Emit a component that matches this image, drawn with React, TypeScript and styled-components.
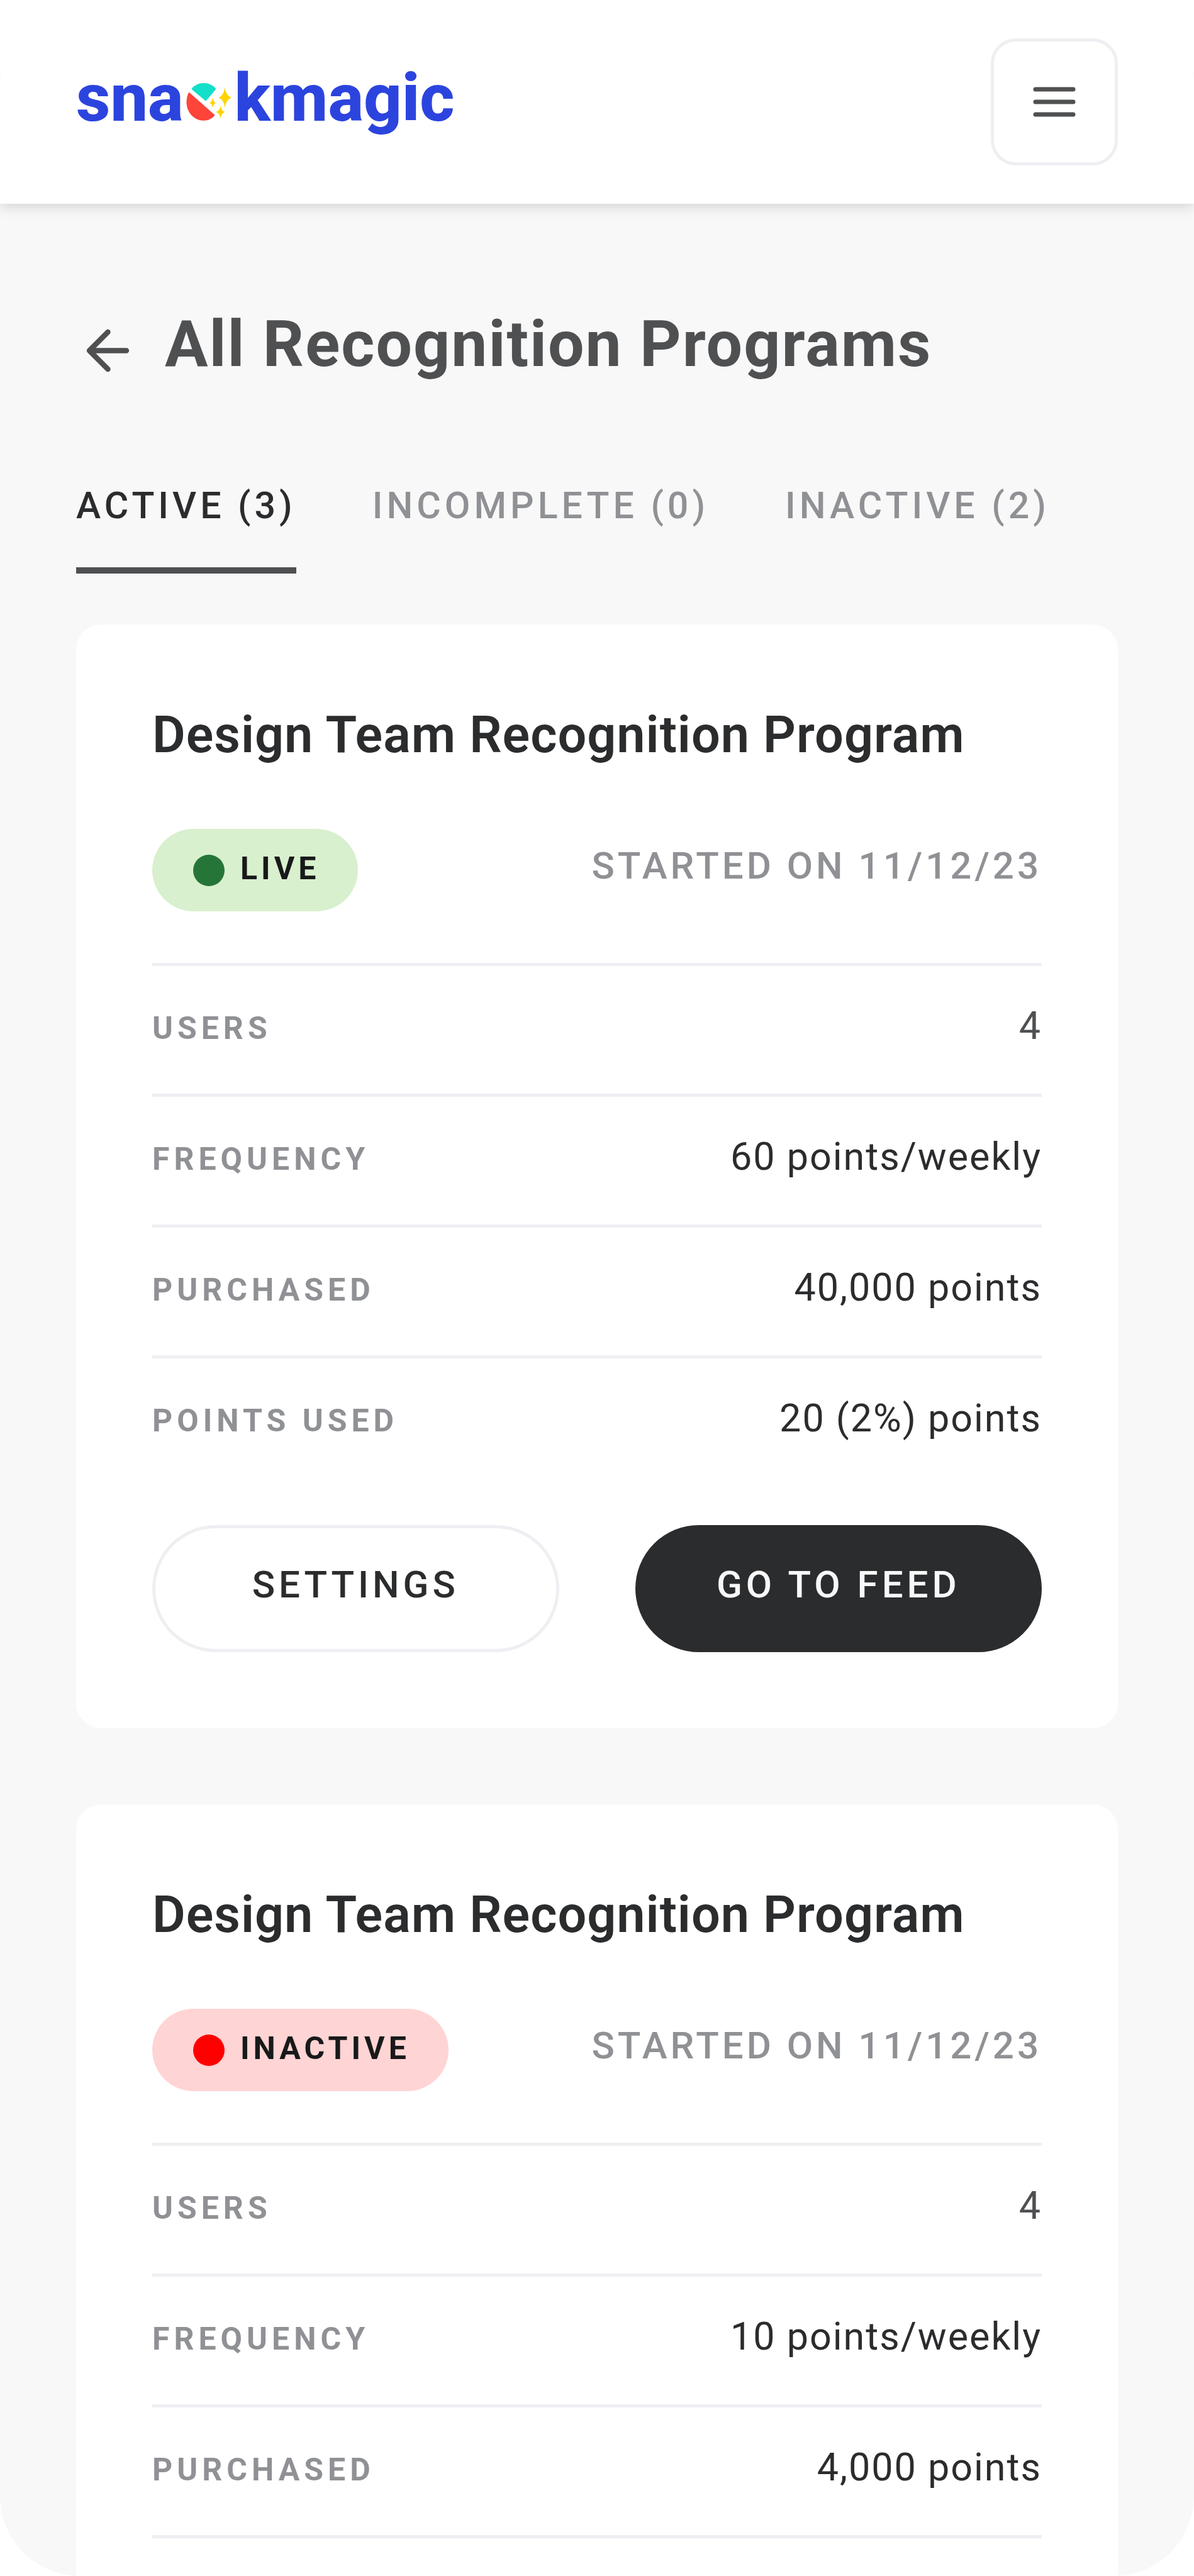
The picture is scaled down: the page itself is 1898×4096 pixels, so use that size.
import React, { useState } from "react";
import styled, { createGlobalStyle, css } from "styled-components";

const color = {
  ink: "#2b2c2e",
  slate: "#4f5052",
  muted: "#8f9195",
  line: "#eeeff2",
  page: "#f8f8f8",
  white: "#ffffff",
};

const GlobalStyle = createGlobalStyle`
  *, *::before, *::after { box-sizing: border-box; }
  body {
    margin: 0;
    background: ${color.white};
    color: ${color.ink};
    font-family: Roboto, "Liberation Sans", sans-serif;
  }
  h1, h2, dl, dt, dd { margin: 0; }
  button { font: inherit; color: inherit; cursor: pointer; }
`;

const capsText = css`
  font-size: 60px;
  line-height: 75px;
  font-weight: 500;
  letter-spacing: 6px;
  text-transform: uppercase;
`;

const Screen = styled.div`
  display: flex;
  flex-direction: column;
  height: 100vh;
  overflow: hidden;
  border-radius: 127px;
  background: ${color.page};
`;

const Header = styled.header`
  position: relative;
  flex: none;
  display: flex;
  align-items: center;
  justify-content: space-between;
  padding: 61px 121px;
  background: ${color.white};
  box-shadow: 0 5px 20px rgba(0, 0, 0, 0.15);
`;

const LogoLink = styled.a`
  display: flex;
  align-items: baseline;
  gap: 4px;
  padding-bottom: 12px;
  color: #2c44de;
  font-size: 106px;
  line-height: 120px;
  font-weight: 800;
  text-decoration: none;
`;

const LogoMark = styled.svg`
  flex: none;
  width: 73px;
  height: 60px;
`;

const MenuButton = styled.button`
  display: flex;
  align-items: center;
  justify-content: center;
  width: 202px;
  height: 202px;
  padding: 0;
  border: 5px solid ${color.line};
  border-radius: 40px;
  background: ${color.white};
`;

const MenuIcon = styled.svg`
  width: 68px;
  height: 48px;
  stroke: ${color.slate};
  stroke-width: 7;
  stroke-linecap: round;
`;

const Main = styled.main`
  flex: 1;
  min-height: 0;
  padding: 160px 121px 121px;
  overflow-y: auto;
  scrollbar-width: none;
`;

const TitleRow = styled.div`
  display: flex;
  align-items: center;
  gap: 40px;
  color: ${color.slate};
`;

const BackLink = styled.a`
  display: flex;
  color: inherit;
`;

const BackIcon = styled.svg`
  width: 101px;
  height: 101px;
  fill: none;
  stroke: currentColor;
  stroke-width: 2;
  stroke-linecap: round;
  stroke-linejoin: round;
`;

const PageTitle = styled.h1`
  padding-bottom: 20px;
  font-size: 102px;
  line-height: 126px;
  font-weight: 700;
  letter-spacing: 2px;
`;

const Tabs = styled.div`
  display: flex;
  gap: 121px;
  margin-top: 136px;
`;

const Tab = styled.button<{ $active: boolean }>`
  ${capsText}
  font-size: 59px;
  padding: 0 0 61px;
  border: 0;
  border-bottom: 10px solid ${(p) => (p.$active ? color.slate : "transparent")};
  background: none;
  color: ${(p) => (p.$active ? color.ink : color.muted)};
  white-space: nowrap;
`;

const CardList = styled.div`
  display: flex;
  flex-direction: column;
  gap: 121px;
  margin-top: 81px;
`;

const Card = styled.article`
  padding: 121px;
  border-radius: 40px;
  background: ${color.white};
`;

const CardTitle = styled.h2`
  font-size: 81px;
  line-height: 110px;
  font-weight: 600;
  letter-spacing: 1px;
`;

const StatusRow = styled.div`
  display: flex;
  align-items: center;
  justify-content: space-between;
  margin: 94px 0 82px;
`;

const Badge = styled.span<{ $live: boolean }>`
  display: flex;
  align-items: center;
  gap: 25px;
  height: 131px;
  padding: 0 61px 0 65px;
  border-radius: 66px;
  background: ${(p) => (p.$live ? "#d8f0cd" : "#ffd4d4")};
`;

const Dot = styled.span<{ $live: boolean }>`
  width: 50px;
  height: 50px;
  border-radius: 50%;
  background: ${(p) => (p.$live ? "#267538" : "#ff0000")};
`;

const BadgeText = styled.span`
  padding-bottom: 6px;
  color: #18191a;
  font-size: 50px;
  line-height: 60px;
  font-weight: 700;
  letter-spacing: 6px;
  text-transform: uppercase;
`;

const Started = styled.span`
  ${capsText}
  letter-spacing: 5px;
  padding-bottom: 14px;
  color: ${color.muted};
`;

const Details = styled.dl`
  border-top: 5px solid ${color.line};
`;

const Detail = styled.div<{ $last: boolean }>`
  display: flex;
  align-items: baseline;
  justify-content: space-between;
  padding: 58px 0 70px;
  border-bottom: ${(p) => (p.$last ? "0" : `5px solid ${color.line}`)};
`;

const Label = styled.dt`
  color: ${color.muted};
  font-size: 50px;
  line-height: 60px;
  font-weight: 700;
  letter-spacing: 7px;
  text-transform: uppercase;
`;

const Value = styled.dd<{ $soft?: boolean }>`
  color: ${(p) => (p.$soft ? color.slate : color.ink)};
  font-size: 61px;
  line-height: 75px;
  letter-spacing: 2px;
`;

const Actions = styled.div`
  display: grid;
  grid-template-columns: 1fr 1fr;
  gap: 121px;
  margin-top: 62px;
`;

const ActionButton = styled.button<{ $primary?: boolean }>`
  ${capsText}
  height: 202px;
  padding: 0 0 14px;
  border: 5px solid ${(p) => (p.$primary ? color.ink : color.line)};
  border-radius: 101px;
  background: ${(p) => (p.$primary ? color.ink : color.white)};
  color: ${(p) => (p.$primary ? color.page : color.ink)};
`;

type Program = {
  id: number;
  name: string;
  live: boolean;
  started: string;
  details: { label: string; value: string; soft?: boolean }[];
};

const programs: Program[] = [
  {
    id: 1,
    name: "Design Team Recognition Program",
    live: true,
    started: "11/12/23",
    details: [
      { label: "Users", value: "4", soft: true },
      { label: "Frequency", value: "60 points/weekly" },
      { label: "Purchased", value: "40,000 points" },
      { label: "Points used", value: "20 (2%) points" },
    ],
  },
  {
    id: 2,
    name: "Design Team Recognition Program",
    live: false,
    started: "11/12/23",
    details: [
      { label: "Users", value: "4", soft: true },
      { label: "Frequency", value: "10 points/weekly" },
      { label: "Purchased", value: "4,000 points" },
    ],
  },
];

const tabs = ["Active (3)", "Incomplete (0)", "Inactive (2)"];

function Logo() {
  return (
    <LogoLink href="#home" aria-label="snackmagic">
      <span>sna</span>
      <LogoMark viewBox="96 136 288 240" aria-hidden="true">
        <path
          fill="#14dfc8"
          d="M130 170C150 148 176 136 205 136C235 136 262 148 281 170Q284 174 281 178L222 247Q218 251 214 247L131 178Q127 174 130 170Z"
        />
        <path
          fill="#ff443a"
          d="M116 198L273 337Q277 341 273 345C255 364 232 375 205 375C145 375 96 323 96 258C96 236 100 216 108 200Q111 194 116 198Z"
        />
        <path fill="#ffd400" d="M340 165Q348 218 382 229Q348 240 340 292Q332 240 299 229Q332 218 340 165Z" />
        <path fill="#ffd400" d="M262 228Q266 256 284 262Q266 268 262 295Q258 268 242 262Q258 256 262 228Z" />
        <path fill="#ffd400" d="M312 279Q317 314 341 320Q317 327 312 361Q307 327 283 320Q307 314 312 279Z" />
      </LogoMark>
      <span>kmagic</span>
    </LogoLink>
  );
}

function ProgramCard({ program }: { program: Program }) {
  const { name, live, started, details } = program;
  return (
    <Card>
      <CardTitle>{name}</CardTitle>
      <StatusRow>
        <Badge $live={live}>
          <Dot $live={live} />
          <BadgeText>{live ? "Live" : "Inactive"}</BadgeText>
        </Badge>
        <Started>Started on {started}</Started>
      </StatusRow>
      <Details>
        {details.map((d, i) => (
          <Detail key={d.label} $last={live && i === details.length - 1}>
            <Label>{d.label}</Label>
            <Value $soft={d.soft}>{d.value}</Value>
          </Detail>
        ))}
      </Details>
      {live && (
        <Actions>
          <ActionButton type="button">Settings</ActionButton>
          <ActionButton type="button" $primary>
            Go to feed
          </ActionButton>
        </Actions>
      )}
    </Card>
  );
}

export default function App() {
  const [active, setActive] = useState(0);
  return (
    <>
      <GlobalStyle />
      <Screen>
        <Header>
          <Logo />
          <MenuButton type="button" aria-label="Menu">
            <MenuIcon viewBox="0 0 68 48" aria-hidden="true">
              <path d="M4 4H64M4 24H64M4 44H64" />
            </MenuIcon>
          </MenuButton>
        </Header>
        <Main>
          <TitleRow>
            <BackLink href="#back" aria-label="Back">
              <BackIcon viewBox="0 0 24 24" aria-hidden="true">
                <path d="M12 19L5 12L12 5M19 12H5" />
              </BackIcon>
            </BackLink>
            <PageTitle>All Recognition Programs</PageTitle>
          </TitleRow>
          <Tabs role="tablist">
            {tabs.map((tab, i) => (
              <Tab
                key={tab}
                type="button"
                role="tab"
                aria-selected={i === active}
                $active={i === active}
                onClick={() => setActive(i)}
              >
                {tab}
              </Tab>
            ))}
          </Tabs>
          <CardList>
            {programs.map((program) => (
              <ProgramCard key={program.id} program={program} />
            ))}
          </CardList>
        </Main>
      </Screen>
    </>
  );
}
